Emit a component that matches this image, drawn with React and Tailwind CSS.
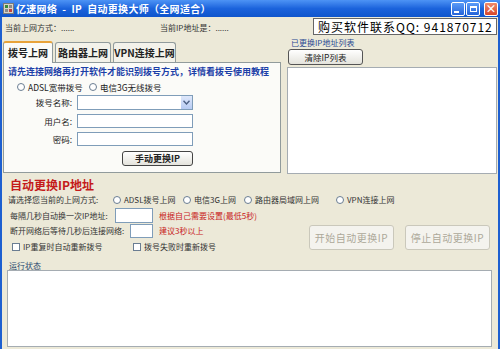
import React from 'react';

function Radio({ label, className = '' }) {
  return (
    <div className={`flex items-center ${className}`}>
      <span className="w-[8px] h-[8px] rounded-full border border-[#6a7d92] bg-white shrink-0" />
      <span className="ml-[3px] whitespace-nowrap">{label}</span>
    </div>
  );
}

function Check({ label, className = '' }) {
  return (
    <div className={`flex items-center ${className}`}>
      <span className="w-[8px] h-[8px] border border-[#6a7d92] bg-white shrink-0" />
      <span className="ml-[3px] whitespace-nowrap">{label}</span>
    </div>
  );
}

function WinButton({ children, close }) {
  return (
    <div
      className={`w-[14px] h-[14px] rounded-[2px] border border-white flex items-center justify-center ${
        close ? 'bg-linear-to-b from-[#f08a6a] to-[#d6452a]' : 'bg-linear-to-b from-[#5a9bf8] to-[#2563d8]'
      }`}
    >
      {children}
    </div>
  );
}

export default function App() {
  return (
    <div className="w-[500px] h-[349px] overflow-hidden flex flex-col bg-[#1d5fd0] font-['Noto_Sans_CJK_SC','Liberation_Sans',sans-serif] text-[#222]">
      {/* title bar */}
      <div className="h-[17px] shrink-0 flex items-center bg-linear-to-b from-[#4d93f5] via-[#1b63dc] to-[#0f55cc] pl-[3px] pr-[2px]">
        <svg width="11" height="11" viewBox="0 0 11 11" className="shrink-0">
          <rect x="0.5" y="0.5" width="10" height="10" fill="#d8d4c8" stroke="#7a7a7a" />
          <rect x="2" y="2" width="3" height="3" fill="#3a8a3a" />
          <rect x="6" y="2" width="3" height="3" fill="#8a8a8a" />
          <rect x="2" y="6" width="3" height="3" fill="#8a8a8a" />
          <rect x="6" y="6" width="3" height="3" fill="#c04040" />
        </svg>
        <span className="ml-[2px] text-white font-bold text-[10px] leading-none whitespace-nowrap tracking-[0.3px]">
          亿速网络 &nbsp;- &nbsp;IP &nbsp;自动更换大师（全网适合）
        </span>
        <div className="ml-auto flex gap-[1px] items-center">
          <WinButton>
            <span className="w-[5px] h-[2px] bg-white mt-[6px] mr-[3px]" />
          </WinButton>
          <WinButton>
            <span className="w-[7px] h-[6px] border border-white border-t-2" />
          </WinButton>
          <div className="w-[2px]" />
          <WinButton close>
            <span className="text-white text-[11px] font-bold leading-none">×</span>
          </WinButton>
        </div>
      </div>

      <div className="flex-1 mx-[2px] bg-[#ece9d8] flex flex-col">
        {/* info row */}
        <div className="h-[21px] shrink-0 flex items-center text-[8px] text-[#333]">
          <span className="ml-[3px] w-[155px] whitespace-nowrap">当前上网方式：......</span>
          <span className="whitespace-nowrap">当前IP地址是：......</span>
          <div className="ml-auto mr-[1px] w-[184px] h-[17px] mb-[2px] bg-white border border-[#666] flex items-center pl-[4px] text-[12px] tracking-[1px] text-black whitespace-nowrap leading-none">
            购买软件联系QQ: 941870712
          </div>
        </div>

        {/* middle */}
        <div className="h-[136px] shrink-0 flex">
          {/* tabs */}
          <div className="ml-[1px] w-[278px] flex flex-col pt-[2px]">
            <div className="h-[22px] flex items-end text-[10px] font-bold leading-none">
              <div className="h-[22px] w-[50px] bg-[#fbfbf8] border border-b-0 border-[#919b9c] border-t-[#e8a33a] border-t-2 rounded-t-[3px] flex items-center justify-center relative z-10 mb-[-1px]">
                拨号上网
              </div>
              <div className="h-[20px] w-[56px] ml-[2px] bg-[#f3f2ea] border border-b-0 border-[#919b9c] rounded-t-[3px] flex items-center justify-center">
                路由器上网
              </div>
              <div className="h-[20px] w-[63px] ml-[2px] bg-[#f3f2ea] border border-b-0 border-[#919b9c] rounded-t-[3px] flex items-center justify-center">
                VPN连接上网
              </div>
            </div>
            <div className="flex-1 bg-[#fbfbf8] border border-[#919b9c] flex flex-col mb-[1px]">
              <div className="h-[10px] mt-[4px] pl-[4px] flex items-center text-[9px] font-bold text-[#1c3fa8] whitespace-nowrap">
                请先连接网络再打开软件才能识别拨号方式，详情看拨号使用教程
              </div>
              <div className="h-[12px] mt-[4px] pl-[13px] flex items-center text-[8.5px]">
                <Radio label="ADSL宽带拨号" className="w-[72px]" />
                <Radio label="电信3G无线拨号" />
              </div>
              <div className="h-[15px] mt-[2px] flex items-center text-[8.5px]">
                <span className="w-[68px] text-right">拨号名称:</span>
                <div className="ml-[5px] w-[116px] h-[15px] bg-white border border-[#7f9db9] flex justify-end">
                  <div className="w-[11px] h-full bg-linear-to-b from-[#dfe8fb] to-[#b7cbf3] flex items-center justify-center">
                    <svg width="7" height="5" viewBox="0 0 7 5">
                      <path d="M0.5 0.8 L3.5 4 L6.5 0.8" fill="none" stroke="#4d6185" strokeWidth="1.4" />
                    </svg>
                  </div>
                </div>
              </div>
              <div className="h-[14px] mt-[4px] flex items-center text-[8.5px]">
                <span className="w-[68px] text-right">用户名:</span>
                <div className="ml-[5px] w-[116px] h-[14px] bg-white border border-[#7f9db9]" />
              </div>
              <div className="h-[14px] mt-[4px] flex items-center text-[8.5px]">
                <span className="w-[68px] text-right">密码:</span>
                <div className="ml-[5px] w-[116px] h-[14px] bg-white border border-[#7f9db9]" />
              </div>
              <div className="mt-[5px] ml-[118px] w-[71px] h-[15px] rounded-[3px] border border-[#444] bg-linear-to-b from-white to-[#e4e3dc] flex items-center justify-center text-[9px] font-bold leading-none">
                手动更换IP
              </div>
            </div>
          </div>

          {/* ip list */}
          <div className="ml-[6px] w-[210px] flex flex-col">
            <div className="h-[10px] flex items-center pl-[4px] text-[8px] text-[#2a4a92] whitespace-nowrap">
              已更换IP地址列表
            </div>
            <div className="mt-[1px] ml-[1px] w-[75px] h-[16px] rounded-[3px] border border-[#555] bg-linear-to-b from-white to-[#e4e3dc] flex items-center justify-center text-[8.5px] leading-none">
              清除IP列表
            </div>
            <div className="mt-[2px] flex-1 bg-white border border-[#a5acb2]" />
          </div>
        </div>

        {/* auto change */}
        <div className="flex flex-col text-[8px] text-[#333]">
          <div className="h-[16px] mt-[3px] pl-[8px] flex items-center text-[12px] font-bold text-[#c41a1a] leading-none">
            自动更换IP地址
          </div>
          <div className="h-[13px] flex items-center pl-[6px]">
            <span className="w-[105px] whitespace-nowrap">请选择您当前的上网方式:</span>
            <Radio label="ADSL拨号上网" className="w-[70px]" />
            <Radio label="电信3G上网" className="w-[61px]" />
            <Radio label="路由器局域网上网" className="w-[92px]" />
            <Radio label="VPN连接上网" />
          </div>
          <div className="flex">
            <div className="flex flex-col">
              <div className="h-[15px] mt-[2px] flex items-center pl-[8px]">
                <span className="w-[105px] whitespace-nowrap">每隔几秒自动换一次IP地址:</span>
                <div className="w-[38px] h-[15px] bg-white border border-[#7f9db9]" />
                <span className="ml-[6px] text-[#c82020] whitespace-nowrap">根据自己需要设置(最低5秒)</span>
              </div>
              <div className="h-[14px] mt-[1px] flex items-center pl-[8px]">
                <span className="w-[120px] whitespace-nowrap">断开网络后等待几秒后连接网络:</span>
                <div className="w-[23px] h-[14px] bg-white border border-[#7f9db9]" />
                <span className="ml-[6px] text-[#c82020] whitespace-nowrap">建议3秒以上</span>
              </div>
              <div className="h-[14px] mt-[2px] flex items-center pl-[10px]">
                <Check label="IP重复时自动重新拨号" className="w-[121px]" />
                <Check label="拨号失败时重新拨号" />
              </div>
            </div>
            <div className="ml-auto mr-[8px] mt-[19px] flex gap-[11px]">
              <div className="w-[85px] h-[25px] rounded-[3px] border border-[#cac8bb] bg-[#f4f3ee] flex items-center justify-center text-[10px] tracking-[0.5px] text-[#aca899] leading-none">
                开始自动更换IP
              </div>
              <div className="w-[85px] h-[25px] rounded-[3px] border border-[#cac8bb] bg-[#f4f3ee] flex items-center justify-center text-[10px] tracking-[0.5px] text-[#aca899] leading-none">
                停止自动更换IP
              </div>
            </div>
          </div>
          <div className="h-[9px] mt-[7px] pl-[7px] flex items-center text-[8px] text-[#2a4a6e]">运行状态</div>
          <div className="ml-[5px] w-[485px] h-[77px] bg-white border border-[#a5acb2]" />
        </div>
      </div>
    </div>
  );
}
